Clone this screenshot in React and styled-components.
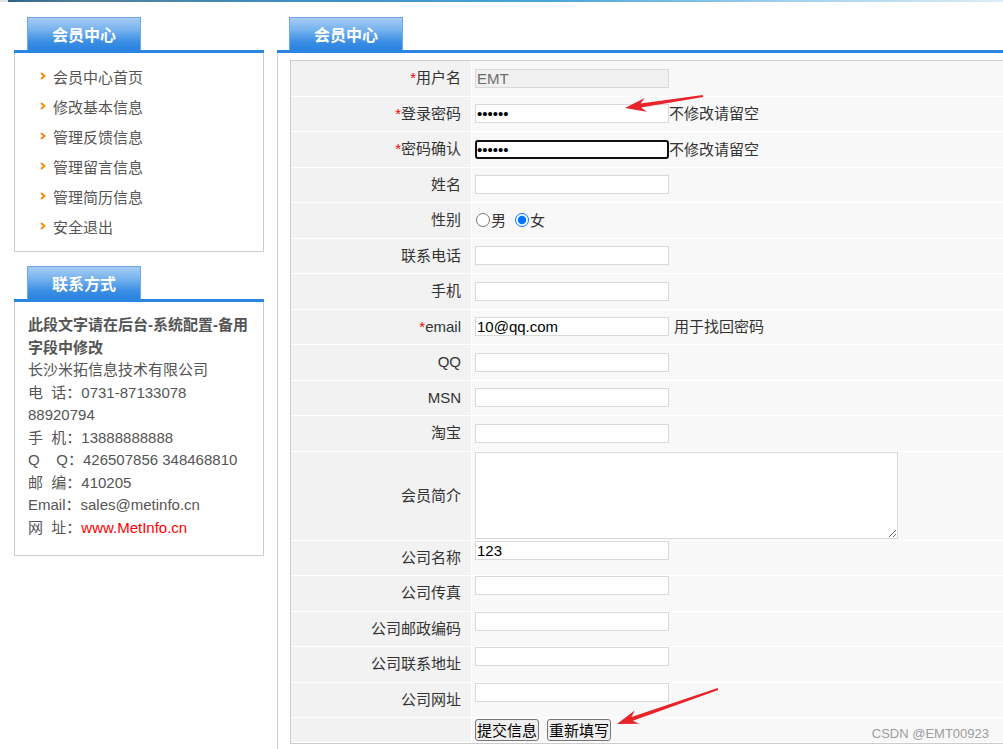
import React from "react";
import styled, { createGlobalStyle, css } from "styled-components";

const GlobalStyle = createGlobalStyle`
  * { box-sizing: border-box; }
  html, body {
    margin: 0;
    padding: 0;
    background: #fff;
    overflow: hidden;
  }
  body {
    font-family: "Liberation Sans", "Noto Sans CJK SC", sans-serif;
    font-size: 15px;
    color: #333;
  }
`;

const Page = styled.div`
  position: relative;
  width: 1003px;
  height: 749px;
  overflow: hidden;
`;

const TopStrip = styled.div`
  height: 2px;
  border-left: 8px solid #e2e2e2;
  background: linear-gradient(
    to right,
    #2e6586 0%,
    #54819b 8%,
    #3c8fc2 30%,
    #4aa6d8 55%,
    #9fd0ec 78%,
    #dcedf7 100%
  );
`;

const Layout = styled.div`
  display: flex;
  align-items: flex-start;
  gap: 13px;
  padding: 15px 0 0 14px;
`;

const Sidebar = styled.aside`
  flex: none;
  width: 250px;
  display: flex;
  flex-direction: column;
  gap: 14px;
`;

const Main = styled.main`
  flex: none;
  width: 740px;
`;

const TabBar = styled.div`
  height: 36px;
  display: flex;
  align-items: flex-end;
  padding-left: ${({ $indent }) => $indent}px;
  border-bottom: 3px solid #2a86e0;
`;

const Tab = styled.div`
  width: 114px;
  height: 33px;
  display: flex;
  align-items: center;
  justify-content: center;
  background: linear-gradient(#a8cdf3, #72b0ee 40%, #3a8de3 75%, #2a83e0);
  border: 1px solid #6ea8e8;
  border-bottom: none;
  color: #fff;
  font-family: "Noto Sans CJK SC", sans-serif;
  font-size: 16px;
  font-weight: bold;
`;

const Box = styled.div`
  border: 1px solid #ccc;
  border-top: none;
`;

const Menu = styled.ul`
  list-style: none;
  margin: 0;
  padding: 8px 0 10px 25px;
`;

const MenuItem = styled.li`
  height: 30px;
  display: flex;
  align-items: center;
  color: #555;
  font-size: 15px;
`;

const Bullet = styled.svg`
  flex: none;
  width: 6px;
  height: 8px;
  margin-right: 7px;
`;

const Contact = styled.div`
  padding: 12px 13px 16px 13px;
  color: #555;
  font-size: 15px;
  line-height: 22.5px;
`;

const Line = styled.div`
  white-space: nowrap;
  font-weight: ${({ $bold }) => ($bold ? "bold" : "normal")};
`;

const Link = styled.a`
  color: #f00;
  text-decoration: none;
`;

const Panel = styled.div`
  border-left: 1px solid #ccc;
  padding: 7px 0 40px 12px;
`;

const FormTable = styled.table`
  width: 740px;
  border: 1px solid #ccc;
  border-collapse: separate;
  border-spacing: 0;
  background: #fff;
`;

const LabelCell = styled.td`
  width: 181px;
  height: ${({ $h }) => $h || 35.5}px;
  padding: 0 10px 0 0;
  border-right: 1px solid #fff;
  border-bottom: 1px solid #fff;
  background: #f2f2f2;
  text-align: right;
  vertical-align: middle;
  line-height: 20px;
  color: #333;
  white-space: nowrap;
`;

const ValueCell = styled.td`
  padding: 0 3px;
  border-bottom: 1px solid #fff;
  background: #f8f8f8;
  vertical-align: ${({ $top }) => ($top ? "top" : "middle")};
  line-height: 19px;
  white-space: nowrap;
  color: #333;
`;

const Req = styled.span`
  color: #f00;
`;

const TextInput = styled.input`
  width: 194px;
  height: 19px;
  margin: 0;
  padding: 0 1px;
  border: 1px solid #d9d9d9;
  background: #fff;
  color: #000;
  font: 15px "Liberation Sans", "Noto Sans CJK SC", sans-serif;
  vertical-align: top;
  outline: none;

  &:disabled {
    background: #f0f0f0;
    color: #6d6d6d;
  }

  ${({ $focused }) =>
    $focused &&
    css`
      border: 2px solid #111;
      border-radius: 3px;
      padding: 0;
    `}
`;

const Hint = styled.span`
  margin-left: ${({ $gap }) => $gap || 0}px;
  vertical-align: top;
`;

const Radio = styled.input`
  width: 14px;
  height: 14px;
  margin: 0 1px 0 ${({ $ml }) => $ml}px;
  vertical-align: -1px;
`;

const TextArea = styled.textarea`
  display: block;
  width: 423px;
  height: 87px;
  margin: 0;
  border: 1px solid #d9d9d9;
  background: #fff;
  font: 15px "Liberation Sans", "Noto Sans CJK SC", sans-serif;
  outline: none;
`;

const Button = styled.button`
  height: 22px;
  margin: 0 8px 0 0;
  padding: 0 1px;
  border: 1px solid #767676;
  border-radius: 3px;
  background: #efefef;
  color: #000;
  font: 15px "Noto Sans CJK SC", sans-serif;
  line-height: 20px;
  vertical-align: middle;
`;

const Overlay = styled.svg`
  position: absolute;
  left: 0;
  top: 0;
  pointer-events: none;
`;

const Watermark = styled.div`
  position: absolute;
  top: 726px;
  right: 14px;
  font-family: "Liberation Sans", sans-serif;
  font-size: 13px;
  line-height: 15px;
  color: #9c9c9c;
`;

const menu = ["会员中心首页", "修改基本信息", "管理反馈信息", "管理留言信息", "管理简历信息", "安全退出"];

const rows = [
  { label: "用户名", req: true, value: "EMT", disabled: true },
  { label: "登录密码", req: true, type: "password", value: "123456", hint: "不修改请留空" },
  { label: "密码确认", req: true, type: "password", value: "123456", focused: true, hint: "不修改请留空" },
  { label: "姓名" },
  { label: "性别", kind: "radio" },
  { label: "联系电话" },
  { label: "手机" },
  { label: "email", req: true, value: "10@qq.com", hint: "用于找回密码", gap: 5 },
  { label: "QQ" },
  { label: "MSN" },
  { label: "淘宝" },
  { label: "会员简介", kind: "textarea", h: 89 },
  { label: "公司名称", value: "123", top: true },
  { label: "公司传真", top: true },
  { label: "公司邮政编码", top: true },
  { label: "公司联系地址", top: true },
  { label: "公司网址", top: true },
];

function arrowPoints(sx, sy, tx, ty, head = 19, half = 7) {
  const len = Math.hypot(tx - sx, ty - sy);
  const ux = (tx - sx) / len;
  const uy = (ty - sy) / len;
  const nx = -uy;
  const ny = ux;
  const bx = tx - ux * head;
  const by = ty - uy * head;
  const p = (x, y) => `${x.toFixed(1)},${y.toFixed(1)}`;
  return [
    p(sx + nx, sy + ny),
    p(bx + ux * 3 + nx * 2, by + uy * 3 + ny * 2),
    p(bx - ux * 2 + nx * half, by - uy * 2 + ny * half),
    p(tx, ty),
    p(bx - ux * 2 - nx * half, by - uy * 2 - ny * half),
    p(bx + ux * 3 - nx * 2, by + uy * 3 - ny * 2),
    p(sx - nx, sy - ny),
  ].join(" ");
}

const FieldValue = ({ row }) => {
  if (row.kind === "radio") {
    return (
      <>
        <Radio type="radio" name="sex" $ml={1} />男
        <Radio type="radio" name="sex" $ml={9} defaultChecked />女
      </>
    );
  }
  if (row.kind === "textarea") return <TextArea />;
  return (
    <>
      <TextInput
        type={row.type || "text"}
        defaultValue={row.value || ""}
        disabled={row.disabled}
        $focused={row.focused}
      />
      {row.hint && <Hint $gap={row.gap}>{row.hint}</Hint>}
    </>
  );
};

export default function App() {
  return (
    <Page>
      <GlobalStyle />
      <TopStrip />
      <Layout>
        <Sidebar>
          <section>
            <TabBar $indent={13}>
              <Tab>会员中心</Tab>
            </TabBar>
            <Box>
              <Menu>
                {menu.map((item) => (
                  <MenuItem key={item}>
                    <Bullet viewBox="0 0 6 8">
                      <polyline points="1,1 4.5,4 1,7" fill="none" stroke="#f08c10" strokeWidth="2" />
                    </Bullet>
                    {item}
                  </MenuItem>
                ))}
              </Menu>
            </Box>
          </section>
          <section>
            <TabBar $indent={13}>
              <Tab>联系方式</Tab>
            </TabBar>
            <Box>
              <Contact>
                <Line $bold>此段文字请在后台-系统配置-备用</Line>
                <Line $bold>字段中修改</Line>
                <Line>长沙米拓信息技术有限公司</Line>
                <Line>电&nbsp;&nbsp;话：0731-87133078</Line>
                <Line>88920794</Line>
                <Line>手&nbsp;&nbsp;机：13888888888</Line>
                <Line>Q&nbsp;&nbsp;&nbsp;&nbsp;Q：426507856 348468810</Line>
                <Line>邮&nbsp;&nbsp;编：410205</Line>
                <Line>Email：sales@metinfo.cn</Line>
                <Line>
                  网&nbsp;&nbsp;址：<Link href="#">www.MetInfo.cn</Link>
                </Line>
              </Contact>
            </Box>
          </section>
        </Sidebar>

        <Main>
          <TabBar $indent={12}>
            <Tab>会员中心</Tab>
          </TabBar>
          <Panel>
            <FormTable>
              <tbody>
                {rows.map((row) => (
                  <tr key={row.label}>
                    <LabelCell $h={row.h}>
                      {row.req && <Req>*</Req>}
                      {row.label}
                    </LabelCell>
                    <ValueCell $top={row.top}>
                      <FieldValue row={row} />
                    </ValueCell>
                  </tr>
                ))}
                <tr>
                  <LabelCell $h={25} />
                  <ValueCell>
                    <Button type="submit">提交信息</Button>
                    <Button type="reset">重新填写</Button>
                  </ValueCell>
                </tr>
              </tbody>
            </FormTable>
          </Panel>
        </Main>
      </Layout>

      <Overlay width="1003" height="749" viewBox="0 0 1003 749">
        <polygon points={arrowPoints(703, 96, 625, 108)} fill="#e8232a" />
        <polygon points={arrowPoints(718, 689, 617, 724)} fill="#e8232a" />
      </Overlay>
      <Watermark>CSDN @EMT00923</Watermark>
    </Page>
  );
}
